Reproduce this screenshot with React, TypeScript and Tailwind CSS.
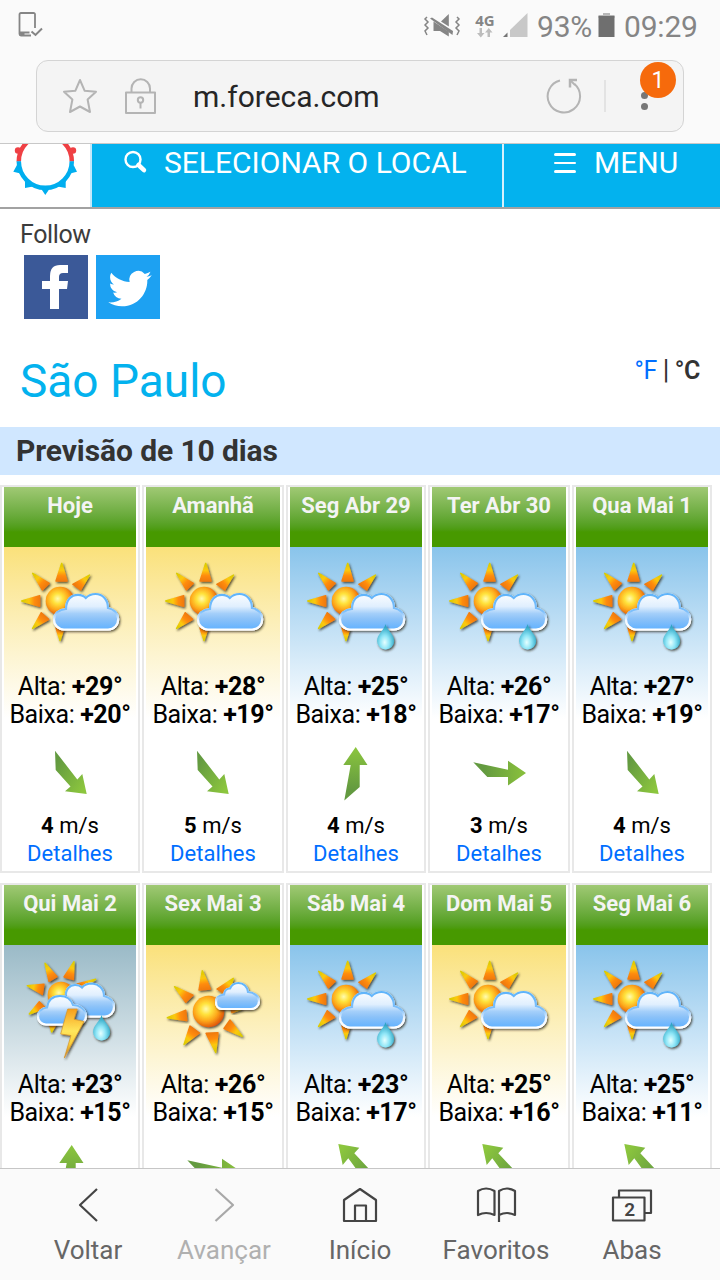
import type { ReactNode } from "react"

type Sky = "sun" | "rain" | "storm"
type Icon = "partly" | "shower" | "thunder" | "mostly"
type Wind = "se" | "n" | "e" | "nw"

type Day = {
  name: string
  sky: Sky
  icon: Icon
  high: string
  low: string
  wind: Wind
  speed?: number
}

const days: Day[] = [
  { name: "Hoje", sky: "sun", icon: "partly", high: "+29°", low: "+20°", wind: "se", speed: 4 },
  { name: "Amanhã", sky: "sun", icon: "partly", high: "+28°", low: "+19°", wind: "se", speed: 5 },
  { name: "Seg Abr 29", sky: "rain", icon: "shower", high: "+25°", low: "+18°", wind: "n", speed: 4 },
  { name: "Ter Abr 30", sky: "rain", icon: "shower", high: "+26°", low: "+17°", wind: "e", speed: 3 },
  { name: "Qua Mai 1", sky: "rain", icon: "shower", high: "+27°", low: "+19°", wind: "se", speed: 4 },
  { name: "Qui Mai 2", sky: "storm", icon: "thunder", high: "+23°", low: "+15°", wind: "n" },
  { name: "Sex Mai 3", sky: "sun", icon: "mostly", high: "+26°", low: "+15°", wind: "e" },
  { name: "Sáb Mai 4", sky: "rain", icon: "shower", high: "+23°", low: "+17°", wind: "nw" },
  { name: "Dom Mai 5", sky: "sun", icon: "partly", high: "+25°", low: "+16°", wind: "nw" },
  { name: "Seg Mai 6", sky: "rain", icon: "shower", high: "+25°", low: "+11°", wind: "nw" },
]

const skyClass: Record<Sky, string> = {
  sun: "from-[#fae17a]",
  rain: "from-[#89c4eb]",
  storm: "from-[#9abac7]",
}

// gradients shared by all the weather icons
const SharedDefs = () => (
  <svg className="absolute h-0 w-0">
    <defs>
      <radialGradient id="sun" cx="0.42" cy="0.42" r="0.6">
        <stop offset="0" stopColor="#fffbb0" />
        <stop offset="0.3" stopColor="#ffe23c" />
        <stop offset="0.65" stopColor="#fda51a" />
        <stop offset="1" stopColor="#e05606" />
      </radialGradient>
      <linearGradient id="cloud" x1="0" y1="0" x2="0" y2="1">
        <stop offset="0" stopColor="#fbfdff" />
        <stop offset="0.35" stopColor="#e0effe" />
        <stop offset="0.55" stopColor="#a4cffa" />
        <stop offset="0.7" stopColor="#8cc2f8" />
        <stop offset="1" stopColor="#62b2ff" />
      </linearGradient>
      <linearGradient id="cloudEdge" x1="0" y1="0" x2="0" y2="1">
        <stop offset="0" stopColor="#5fb4fa" />
        <stop offset="0.5" stopColor="#7fc0fb" />
        <stop offset="0.75" stopColor="#f4f9ff" />
        <stop offset="1" stopColor="#ffffff" />
      </linearGradient>
      <radialGradient id="drop" cx="0.45" cy="0.72" r="0.6">
        <stop offset="0" stopColor="#e6ffff" />
        <stop offset="0.45" stopColor="#8fe6f7" />
        <stop offset="1" stopColor="#2fa6c4" />
      </radialGradient>
      <linearGradient id="bolt" x1="0" y1="0" x2="0" y2="1">
        <stop offset="0" stopColor="#f79e1b" />
        <stop offset="0.45" stopColor="#ffe65c" />
        <stop offset="0.7" stopColor="#fbd03c" />
        <stop offset="1" stopColor="#c77a1c" />
      </linearGradient>
      <filter id="shade" x="-20%" y="-20%" width="150%" height="150%">
        <feDropShadow dx="1.2" dy="1.4" stdDeviation="0.8" floodColor="#2c2818" floodOpacity="0.8" />
      </filter>
      <linearGradient id="wind-se" x1="0.1" y1="0.2" x2="0.9" y2="0.9">
        <stop offset="0" stopColor="#639a40" />
        <stop offset="1" stopColor="#8cc63e" />
      </linearGradient>
      <linearGradient id="wind-n" x1="0.5" y1="1" x2="0.5" y2="0">
        <stop offset="0.2" stopColor="#639a40" />
        <stop offset="1" stopColor="#8cc63e" />
      </linearGradient>
      <linearGradient id="wind-e" x1="0" y1="0.5" x2="1" y2="0.5">
        <stop offset="0.2" stopColor="#639a40" />
        <stop offset="0.9" stopColor="#86bd3c" />
      </linearGradient>
      <linearGradient id="wind-nw" x1="0.9" y1="0.9" x2="0.1" y2="0.1">
        <stop offset="0" stopColor="#639a40" />
        <stop offset="1" stopColor="#8cc63e" />
      </linearGradient>
    </defs>
  </svg>
)

// tip point first, then the two base points
type RayPoints = [number, number, number, number, number, number]

const Ray = ({ id, p }: { id: string; p: RayPoints }) => (
  <>
    <linearGradient
      id={id}
      gradientUnits="userSpaceOnUse"
      x1={p[0]}
      y1={p[1]}
      x2={(p[2] + p[4]) / 2}
      y2={(p[3] + p[5]) / 2}
    >
      <stop offset="0" stopColor="#d8cc00" />
      <stop offset="0.4" stopColor="#fcc80c" />
      <stop offset="0.7" stopColor="#ff8c0c" />
      <stop offset="1" stopColor="#f07a10" />
    </linearGradient>
    <path
      d={`M${p[0]} ${p[1]}L${p[2]} ${p[3]}L${p[4]} ${p[5]}Z`}
      fill={`url(#${id})`}
      stroke={`url(#${id})`}
      strokeWidth="1.4"
      strokeLinejoin="round"
      filter="url(#shade)"
    />
  </>
)

const rays: Record<"partly" | "thunder" | "mostly", RayPoints[]> = {
  partly: [
    [41.7, 3.3, 36, 21, 47, 21],
    [12.7, 13.3, 22.3, 30, 29.3, 23.3],
    [69.5, 15, 52.8, 24.3, 60.7, 30],
    [1.7, 41, 19.7, 35.7, 19.7, 46.3],
    [12.5, 68.5, 21.3, 52.7, 28.7, 59.3],
    [40, 80.5, 36, 68, 44, 68],
  ],
  thunder: [
    [25, 5.3, 29, 23.3, 37, 18.7],
    [54, 3.7, 44, 19, 53.4, 21.5],
    [7.3, 27.7, 24, 26.3, 22.3, 36.5],
    [9.3, 56, 19.3, 43.7, 25.3, 50],
    [75.7, 21.3, 57.3, 26, 60, 32],
    [31.7, 74, 29, 65, 37, 65],
  ],
  mostly: [
    [38.3, 12.7, 35, 32, 46.5, 31],
    [10.5, 28.7, 21.7, 44.3, 29, 37.2],
    [3.3, 59.7, 21.8, 52.2, 22.7, 62.5],
    [20, 86.5, 26, 68, 35.5, 75],
    [51.7, 94.5, 42, 75.3, 54, 74.7],
    [78.3, 78.3, 60, 70.5, 66, 62],
    [69.3, 20.3, 53, 31, 64, 38],
    [78, 51, 66, 48, 68, 54.5],
  ],
}

const Cloud = ({ d }: { d: string }) => (
  <>
    <path d={d} fill="#fff" stroke="#fff" strokeWidth="2" filter="url(#shade)" />
    <path d={d} fill="url(#cloud)" stroke="url(#cloudEdge)" strokeWidth="2.2" />
  </>
)

const Drop = ({ x, y }: { x: number; y: number }) => (
  <path
    transform={`translate(${x} ${y})`}
    d="M0 0C1.2 6 8.6 10 8.6 17A8.4 8.4 0 0 1 -8.4 17C-8.4 10 -1.2 6 0 0Z"
    fill="url(#drop)"
    filter="url(#shade)"
  />
)

const bigCloud =
  "M44 69.5C38 69.5 34 64.5 34 59.5C34 53.5 39 49.5 46 49C46 40 51 34.8 58 34.8C61.5 34.8 64 36 65.8 38C68.5 35.2 71.5 34 75.5 34C83 34 88 40 88 48C94 49 98.2 53.5 98.2 59C98.2 65 94 69.5 88 69.5Z"

const WeatherIcon = ({ icon, id }: { icon: Icon; id: string }) => {
  const rayKey = icon === "shower" ? "partly" : icon
  return (
    <svg width="104" height="104" viewBox="0 0 104 104" className="overflow-visible">
      {rays[rayKey].map((p, i) => (
        <Ray key={i} id={`${id}-ray${i}`} p={p} />
      ))}
      {(icon === "partly" || icon === "shower") && (
        <>
          <circle cx="40" cy="41" r="14.3" fill="url(#sun)" filter="url(#shade)" />
          <Cloud d={bigCloud} />
        </>
      )}
      {icon === "shower" && <Drop x={79.5} y={64} />}
      {icon === "thunder" && (
        <>
          <circle cx="41" cy="37" r="13.3" fill="url(#sun)" filter="url(#shade)" />
          <Cloud d="M52 58.5C44 58.5 40 52 42 46C44 42 44 41 46 39C45 31 50 27 55 27C58.5 27 60.5 28 62 29.5C64.5 26.5 68 25.5 72 25.5C79 26 84 31 84 38C90 39.5 94 43.5 94 49C94 54.5 90 58.5 85 58.5Z" />
          <Cloud d="M26 66.5C21 66.5 18 62.5 18 58.5C18 53.5 22 50 27 49.5C28 42 33 38 40 38C47 38 51 41 53 47C60 47 66 52 66 58C66 63 62 66.5 57 66.5Z" />
          <path
            d="M47.7 51H57.3L54 61.3L64 63.5L44.3 100L51 77.5L40.7 76Z"
            fill="url(#bolt)"
            stroke="#d9962a"
            strokeWidth="0.7"
            filter="url(#shade)"
          />
          <Drop x={81.5} y={57} />
        </>
      )}
      {icon === "mostly" && (
        <>
          <circle cx="44.5" cy="53.5" r="15.7" fill="url(#sun)" filter="url(#shade)" />
          <Cloud d="M58 51C54 51 52 47.5 52 44C52 39.5 55.5 37 60 36.5C60.5 32.5 63 30.5 66 30.5C67.5 27 70.5 25 74.5 25C79.5 25 83.5 28.5 84 34C90 34.5 95 38 95 43C95 48 91 51 87 51Z" />
        </>
      )}
    </svg>
  )
}

const windPath: Record<Wind, string> = {
  se: "M15 7.7L37.3 36.5L42.3 31L46.7 51L25 48.3L30.5 43.5L15.7 27Z",
  n: "M29.7 4L41.5 22H33.7V44L18.3 57.5L24.7 22H17.3Z",
  e: "M58 30L40 42.5V34H19.3L5.3 19.3L40 26.7V17.7Z",
  nw: "M12.3 3L33.3 6.7L28.3 12.3L45 30L45 48L22.3 17.3L16.7 24Z",
}

const DayCard = ({ day, index }: { day: Day; index: number }) => (
  <div className="h-[388px] border-2 border-[#e8e8e8] bg-white px-0.5">
    <div className="h-[60px] bg-linear-to-b from-[#a0c974] to-[#479900] to-75% pt-[5px] text-center text-[22px] leading-7 font-bold text-[#f4f4f4]">
      {day.name}
    </div>
    <div className={`h-[181px] bg-linear-to-b ${skyClass[day.sky]} to-white to-95%`}>
      <div className={`h-[126px] pt-[13px] ${index % 5 === 1 ? "pl-[18px]" : "pl-4"}`}>
        <WeatherIcon icon={day.icon} id={`day${index}`} />
      </div>
      <div className="-mx-1 text-center text-[25px] leading-7 tracking-[-0.4px] whitespace-nowrap text-black">
        <p>
          Alta: <b>{day.high}</b>
        </p>
        <p>
          Baixa: <b>{day.low}</b>
        </p>
      </div>
    </div>
    <svg
      width="60"
      height="60"
      viewBox="0 0 60 60"
      className={`mt-[15px] ${index === 5 || index === 8 ? "ml-[38px]" : "ml-9"}`}
    >
      <path d={windPath[day.wind]} fill={`url(#wind-${day.wind})`} />
    </svg>
    {day.speed && (
      <div className="mt-[9px] text-center text-[22px] leading-7 text-black">
        <p>
          <b>{day.speed}</b> m/s
        </p>
        <a className="text-[#006eff]">Detalhes</a>
      </div>
    )}
  </div>
)

const StatusBar = () => (
  <div className="flex h-[50px] items-center text-[30px] tracking-[-0.2px] text-[#858585]">
    <svg width="28" height="28" viewBox="0 0 28 28" className="mt-0.5 ml-4" fill="none">
      <path d="M19 16V2.500Q19 1 17.500 1H5Q3.500 1 3.500 2.500V22Q3.500 23.500 5 23.500H15" stroke="#858585" strokeWidth="1.8" />
      <path d="M3 19.500H13.500V21.500H8.500V23H5Q3 23 3 21Z" fill="#858585" />
      <path d="M15.500 19.500L19.500 23L26 16.500" stroke="#858585" strokeWidth="2" />
    </svg>
    <svg width="38" height="24" viewBox="0 0 38 24" className="mt-0.5 ml-[379px]" fill="none">
      <path d="M4 3L2 5L5 8L2 11L5 14L2 17L4 21" stroke="#858585" strokeWidth="1.5" />
      <path d="M34 3L36 5L33 8L36 11L33 14L36 17L34 21" stroke="#858585" strokeWidth="1.500" />
      <path d="M7 4.500L9 3.500L30 17L29.500 21Z" fill="#858585" />
      <path d="M10.500 7.500L25.800 17.700V22.500L17 17H10.500Z" fill="#858585" />
      <path d="M25.800 0V12.500L18 7.500Z" fill="#858585" />
    </svg>
    <div className="ml-[14px] flex w-5 flex-col items-center tracking-normal">
      <span className="font-['Open_Sans'] text-[15px] leading-4 font-bold">4G</span>
      <svg width="16" height="10" viewBox="0 0 16 10" fill="#bdbdbd">
        <path d="M2.500 0H5V5H7.500L3.800 9.500L0 5H2.500Z" />
        <path d="M10.500 9H13V4.500H15.500L11.800 0L8 4.500H10.500Z" />
      </svg>
    </div>
    <svg width="25" height="24" viewBox="0 0 25 24" className="ml-2">
      <path d="M24.500 0V24H7V17Z" fill="#c8c8c8" />
      <path d="M4.500 19.500V24H0Z" fill="#757575" />
    </svg>
    <span className="mt-0.5 ml-[9px] w-[61px]">93%</span>
    <svg width="17" height="24" viewBox="0 0 17 24">
      <path d="M5 0H12V2H16.500V5H0.500V2H5Z" fill="#b8b8b8" />
      <path d="M0.500 3H16.500V24H0.500Z" fill="#6f6f6f" />
    </svg>
    <span className="mt-0.5 ml-[9px]">09:29</span>
  </div>
)

const AddressBar = () => (
  <div className="mx-9 mt-[10px] flex h-[72px] w-[648px] items-center rounded-xl border border-[#d4d4d4] bg-[#f4f4f4]">
    <svg width="36" height="36" viewBox="0 0 36 36" className="ml-[25px]" fill="none" stroke="#b4b4b4" strokeWidth="2">
      <path d="M18 2L22.700 12.800L34 13.800L25.600 21.500L28 34L18 28.500L8 34L10.400 21.500L2 13.800L13.300 12.800Z" strokeLinejoin="round" />
    </svg>
    <svg width="32" height="36" viewBox="0 0 32 36" className="ml-[26px]" fill="none" stroke="#b4b4b4" strokeWidth="2">
      <path d="M2 14.500H31V35H2Z" strokeLinejoin="round" />
      <path d="M7.500 14V10.500A9 9 0 0 1 26 10.500V14" />
      <circle cx="16.500" cy="22" r="2.700" />
      <path d="M16.500 24.700V30.500" />
    </svg>
    <span className="ml-[37px] w-[340px] text-[30px] text-[#262626]">m.foreca.com</span>
    <svg width="36" height="36" viewBox="0 0 36 36" className="ml-[13px]" fill="none" stroke="#b4b4b4" strokeWidth="2">
      <path d="M14 2.500A16.200 16.200 0 1 0 28.500 6" />
      <path d="M24 9.500V2H31" strokeWidth="2.500" />
      <path d="M24 2L29 7" />
    </svg>
    <div className="ml-[22px] h-8 w-0.5 bg-[#e3e3e3]" />
    <div className="relative ml-[34px] flex h-10 w-2 flex-col items-center justify-end gap-1">
      <span className="h-[7px] w-[7px] rounded-full bg-[#777]" />
      <span className="mb-[6px] h-[7px] w-[7px] rounded-full bg-[#777]" />
      <span className="absolute -top-[14px] left-0 flex h-9 w-9 items-center justify-center rounded-full bg-[#f66a0c] pt-0.5 text-[23px] text-white">
        1
      </span>
    </div>
  </div>
)

const SiteHeader = () => (
  <div className="flex h-[65px] border-b-2 border-[#a2a2a2] text-[30px] leading-[38px] text-white">
    <div className="w-[92px] border-r-2 border-[#c5e9fa] bg-white">
      <svg width="90" height="63" viewBox="0 144 90 63">
        <path d="M18.800 161.500A26.500 26.500 0 0 1 71.800 161.500" fill="none" stroke="#ef4044" strokeWidth="4.500" />
        <circle cx="18" cy="150.500" r="3.200" fill="#ef4044" />
        <circle cx="73" cy="150.500" r="3.200" fill="#ef4044" />
        <path d="M18.800 161.300A26.500 26.500 0 0 0 71.800 161.300" fill="none" stroke="#00aeef" strokeWidth="4.500" />
        <path
          d="M17 165L13.300 171.800L20.500 173.500Z M73.600 165L77 171.800L70 173.500Z M25 179V188L33 186.500Z M65.700 179V188L57.500 186.500Z M41 188.500L45.300 195L49.700 188.500Z"
          fill="#00aeef"
        />
      </svg>
    </div>
    <div className="flex w-[412px] border-r-2 border-[#d5f1fc] bg-[#03b2ee]">
      <svg width="24" height="24" viewBox="0 0 24 24" className="mt-[6px] ml-8" fill="none" stroke="#fff">
        <circle cx="9" cy="9.500" r="7.500" strokeWidth="2.4" />
        <path d="M14.500 15L20 20.200" strokeWidth="4.500" strokeLinecap="round" />
      </svg>
      <span className="ml-4 whitespace-nowrap">SELECIONAR O LOCAL</span>
    </div>
    <div className="flex flex-1 bg-[#03b2ee]">
      <div className="mt-[9px] ml-[50px] flex w-[22px] flex-col gap-[6px]">
        <span className="h-[2.5px] rounded bg-white" />
        <span className="h-[2.5px] rounded bg-white" />
        <span className="h-[2.5px] rounded bg-white" />
      </div>
      <span className="ml-[18px]">MENU</span>
    </div>
  </div>
)

const NavItem = ({ label, muted, children }: { label: string; muted?: boolean; children: ReactNode }) => (
  <div className={`flex w-[136px] flex-col items-center ${muted ? "text-[#b0b0b0]" : "text-[#666]"}`}>
    <svg
      width="44"
      height="38"
      viewBox="0 0 44 38"
      fill="none"
      stroke={muted ? "#a8a8a8" : "#444"}
      strokeWidth="2.2"
      strokeLinejoin="round"
    >
      {children}
    </svg>
    <span className="mt-[10px] text-[26px] leading-8">{label}</span>
  </div>
)

const BottomNav = () => (
  <div className="flex h-28 shrink-0 border-t border-[#c6c6c6] bg-[#fafafa] px-5 pt-[17px]">
    <NavItem label="Voltar">
      <path d="M31 3L14 19L31 35" />
    </NavItem>
    <NavItem label="Avançar" muted>
      <path d="M13.500 3L31 19L13.500 35" />
    </NavItem>
    <NavItem label="Início">
      <path d="M6 14L22 3L38 14V35H6Z" />
      <path d="M17 35V19.500H28V35" />
    </NavItem>
    <NavItem label="Favoritos">
      <path d="M4 29V5Q12 0 20.500 5V29Q12 25 4 29Z" />
      <path d="M25 36V5Q33 0 41 5V29Q33 25 25 29" />
    </NavItem>
    <NavItem label="Abas">
      <path d="M9 11V4.500H41V27H34" />
      <path d="M3 11.500H34.500V34.500H3Z" />
      <text x="19.800" y="29.500" textAnchor="middle" fontSize="19" fontWeight="600" fill="#444" stroke="none">
        2
      </text>
    </NavItem>
  </div>
)

const App = () => {
  return (
    <div className="flex h-[1280px] w-[720px] flex-col overflow-hidden bg-white font-['Roboto',sans-serif]">
      <SharedDefs />
      <div className="h-36 shrink-0 border-b border-[#c8c8c8] bg-[#fafafa]">
        <StatusBar />
        <AddressBar />
      </div>
      <div className="min-h-0 flex-1 overflow-hidden">
        <SiteHeader />
        <div className="h-[218px] px-5 pt-3">
          <p className="text-[25px] leading-7 tracking-[-0.4px] text-[#3c3c3c]">Follow</p>
          <div className="mt-[6px] ml-1 flex gap-2">
            <svg width="64" height="64" viewBox="0 0 64 64" className="bg-[#3b5998]">
              <path d="M26 54V34H18V26H26V21Q26 10 36 10H44V18H39Q35 18 35 22V26H44L43 34H35V54Z" fill="#fff" />
            </svg>
            <svg width="64" height="64" viewBox="0 0 64 64" className="bg-[#1da1f2]">
              <path
                transform="translate(12.300 12) scale(1.810)"
                d="M23.953 4.570a10 10 0 0 1-2.825.775 4.958 4.958 0 0 0 2.163-2.723c-.951.555-2.005.959-3.127 1.184a4.920 4.920 0 0 0-8.384 4.482C7.690 8.095 4.067 6.130 1.640 3.162a4.822 4.822 0 0 0-.666 2.475c0 1.710.870 3.213 2.188 4.096a4.904 4.904 0 0 1-2.228-.616v.060a4.923 4.923 0 0 0 3.946 4.827 4.996 4.996 0 0 1-2.212.085 4.936 4.936 0 0 0 4.604 3.417 9.867 9.867 0 0 1-6.102 2.105c-.390 0-.779-.023-1.170-.067a13.995 13.995 0 0 0 7.557 2.209c9.053 0 13.998-7.496 13.998-13.985 0-.210 0-.420-.015-.630a9.935 9.935 0 0 0 2.460-2.548l-.047-.020z"
                fill="#fff"
              />
            </svg>
          </div>
          <div className="mt-[34px] flex justify-between">
            <h1 className="text-[46px] leading-[56px] text-[#03b2ee]">São Paulo</h1>
            <p className="mt-1 text-[25px] leading-7 tracking-[-0.4px] text-[#333]">
              <a className="text-[#006eff]">°F</a> <span className="text-[27px] leading-none">|</span>{" "}
              <b className="font-semibold">°C</b>
            </p>
          </div>
        </div>
        <h2 className="h-12 bg-[#d0e7ff] pl-4 text-[30px] leading-[47px] font-bold tracking-[-0.1px] text-[#333]">
          Previsão de 10 dias
        </h2>
        <div className="mt-[10px] grid w-[712px] grid-cols-[140px_142px_140px_142px_140px] gap-x-0.5 gap-y-[10px]">
          {days.map((day, i) => (
            <DayCard key={day.name} day={day} index={i} />
          ))}
        </div>
      </div>
      <BottomNav />
    </div>
  )
}

export default App
